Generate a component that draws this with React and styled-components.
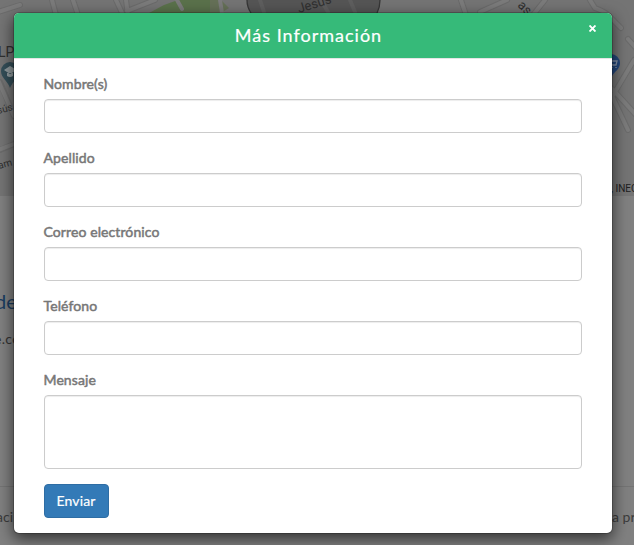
import React from "react";
import styled, { createGlobalStyle } from "styled-components";

const GlobalStyle = createGlobalStyle`
  *, *::before, *::after { box-sizing: border-box; }
  html, body { margin: 0; height: 545px; overflow: hidden; background: #808080; }
  body { font-family: Lato, "Open Sans", sans-serif; font-size: 14px; line-height: 20px; color: #777; }
`;

const Page = styled.div`
  position: relative;
  display: flex;
  flex-direction: column;
  width: 634px;
  height: 545px;
  overflow: hidden;
  background: #808080;
`;

const MapArea = styled.div`
  height: 196px;
  flex: none;
  svg { display: block; }
`;

const ContactRow = styled.div`
  padding-top: 91px;
  height: 291px;
  border-bottom: 1px solid #747474;
`;

const ContactTitle = styled.div`
  margin-left: -5px;
  font-size: 20px;
  line-height: 28px;
  color: #1b3d60;
`;

const ContactMail = styled.div`
  margin: 14px 0 0 -6px;
  font-size: 14px;
  letter-spacing: 0.3px;
  color: #333;
`;

const FooterRow = styled.div`
  display: flex;
  justify-content: space-between;
  padding-top: 20px;
  font-size: 14px;
  color: #3c3c3c;
  white-space: nowrap;
  span:first-child { margin-left: -4px; }
  span:last-child { width: 22px; }
`;

const Overlay = styled.div`
  position: absolute;
  inset: 0;
  padding: 12px 21px 0 13px;
`;

const Dialog = styled.section`
  width: 600px;
  height: 522px;
  border: 1px solid rgba(0, 0, 0, 0.2);
  border-radius: 6px;
  background: #fff;
  background-clip: padding-box;
  box-shadow: 0 5px 15px rgba(0, 0, 0, 0.6);
`;

const Header = styled.header`
  display: grid;
  grid-template-columns: 34px 1fr 40px;
  height: 46px;
  border-bottom: 1px solid #e5e5e5;
  border-radius: 5px 5px 0 0;
  background: #36ba79;
  background-clip: padding-box;
`;

const Title = styled.h4`
  grid-column: 2;
  margin: 0;
  padding-right: 3px;
  font-size: 18px;
  font-weight: 400;
  line-height: 45px;
  letter-spacing: 1px;
  text-align: center;
  color: #fff;
  -webkit-text-stroke: 0.2px #fff;
`;

const CloseButton = styled.button`
  display: flex;
  align-items: flex-start;
  justify-content: flex-start;
  padding: 12px 0 0 17px;
  border: 0;
  background: none;
`;

const Form = styled.form`
  padding: 15px 30px;
`;

const Field = styled.div`
  margin-bottom: 15px;
`;

const Label = styled.label`
  display: block;
  width: max-content;
  margin: 0 0 5px -0.5px;
  font-size: 14px;
  font-weight: 400;
  line-height: 20px;
  letter-spacing: 0.1px;
  color: #777;
  -webkit-text-stroke: 0.5px #777;
`;

const Input = styled.input`
  display: block;
  width: 100%;
  height: ${(p) => p.$height || 34}px;
  padding: 6px 12px;
  border: 1px solid #ccc;
  border-radius: 4px;
  background: #fff;
  box-shadow: inset 0 1px 1px rgba(0, 0, 0, 0.075);
  font: inherit;
  resize: none;
`;

const Submit = styled.button`
  display: block;
  width: 65px;
  height: 34px;
  padding: 0 1px 0 0;
  border: 1px solid #2e6da4;
  border-radius: 4px;
  background: #337ab7;
  color: #fff;
  font: 400 14px/20px Lato, sans-serif;
  letter-spacing: 0.1px;
  -webkit-text-stroke: 0.2px #fff;
`;

const fields = [
  { id: "nombre", label: "Nombre(s)" },
  { id: "apellido", label: "Apellido" },
  { id: "correo", label: "Correo electrónico" },
  { id: "telefono", label: "Teléfono" },
  { id: "mensaje", label: "Mensaje", as: "textarea", height: 74 },
];

function StreetMap() {
  return (
    <svg width="634" height="196" viewBox="0 0 634 196" aria-hidden="true">
      <rect width="634" height="196" fill="#747474" />
      <path d="M149 13 164 5 178 0H220L224 13Z" fill="#5a714b" />
      <path d="M210 0h11l8 8-8 5h-11Z" fill="#657057" />
      <path d="M247 0Q247 7 251 13H377Q380 7 380 0Z" fill="#555" />
      <g fill="none" stroke="#6b6b6b" strokeWidth="6" strokeLinecap="round">
        <path d="M-2 12 20 5M52 0l4 15M73 0l5 15M116 0l7 15M126 0l2 15M127 11 155 0M461 0l5 15M480 12 507 0M545 0l-12 15M0 82l14 34M0 150l14-6" />
        <path d="M590 0l5 8q8 3 12 6l14 14M628 39l8 9M606 107l28-47M606 83l10 10 20 22M612 96l16 34" />
      </g>
      <g fill="none" stroke="#7b7b7b" strokeWidth="4" strokeLinecap="round">
        <path d="M-2 12 20 5M52 0l4 15M73 0l5 15M116 0l7 15M126 0l2 15M127 11 155 0M177 0l5 9M220 0l2 13M461 0l5 15M480 12 507 0M545 0l-12 15M-2 80l16 36M-2 150l16-6" />
        <path d="M590 0l5 8q8 3 12 6l14 14M628 39l8 9M606 107l28-47M606 83l10 10 20 22M612 96l16 34" />
        <path d="M260 0l4 12M321 0l7 12M350 0l5 12" stroke="#5e5e5e" />
      </g>
      <path d="M247 0Q247 7 251 13M380 0Q380 7 377 13" fill="none" stroke="#363636" strokeWidth="1.3" />
      <g fontFamily="Roboto, sans-serif" fill="#303030">
        <text x="299" y="13" fontSize="13" transform="rotate(-17 299 13)">Jesús</text>
        <text x="517" y="6" fontSize="13" transform="rotate(44 517 6)">as J</text>
        <text x="-2" y="57" fontSize="14">LP</text>
        <text x="-2" y="114" fontSize="10" transform="rotate(-15 -2 114)">sús</text>
        <text x="-1" y="169" fontSize="10" transform="rotate(-15 -1 169)">am</text>
        <text x="611" y="192" fontSize="10" fill="#202020">, INEGI</text>
      </g>
      <path d="M10 62a9 9 0 0 1 9 9c0 6-6 10-9 17-2-7-9-10-9-17a9 9 0 0 1 9-9Z" fill="#344e58" />
      <path d="m4 70 6-4 7 4-7 4ZM7 73v3q3 2 6 0v-3" fill="#919b9e" />
      <path d="M611 54a9 9 0 0 1 9 9c0 6-5 8-8 13-3-5-10-7-10-13a9 9 0 0 1 9-9Z" fill="#24477c" />
      <path d="M608 60h2l2 5h4l1-4h-6M612 67v1M616 67v1" fill="none" stroke="#8593a8" strokeWidth="1.3" />
    </svg>
  );
}

export default function App() {
  return (
    <>
      <GlobalStyle />
      <Page>
        <MapArea><StreetMap /></MapArea>
        <ContactRow>
          <ContactTitle>de</ContactTitle>
          <ContactMail>e.co</ContactMail>
        </ContactRow>
        <FooterRow><span>aci</span><span>a pr</span></FooterRow>
        <Overlay>
          <Dialog role="dialog" aria-labelledby="dialog-title">
            <Header>
              <Title id="dialog-title">Más Información</Title>
              <CloseButton aria-label="Cerrar">
                <svg width="7" height="7" viewBox="0 0 7 7">
                  <path d="m.5.5 6 6m0-6-6 6" stroke="#fff" strokeWidth="1.9" />
                </svg>
              </CloseButton>
            </Header>
            <Form>
              {fields.map((f) => (
                <Field key={f.id}>
                  <Label htmlFor={f.id}>{f.label}</Label>
                  <Input as={f.as} id={f.id} $height={f.height} />
                </Field>
              ))}
              <Submit type="button">Enviar</Submit>
            </Form>
          </Dialog>
        </Overlay>
      </Page>
    </>
  );
}
